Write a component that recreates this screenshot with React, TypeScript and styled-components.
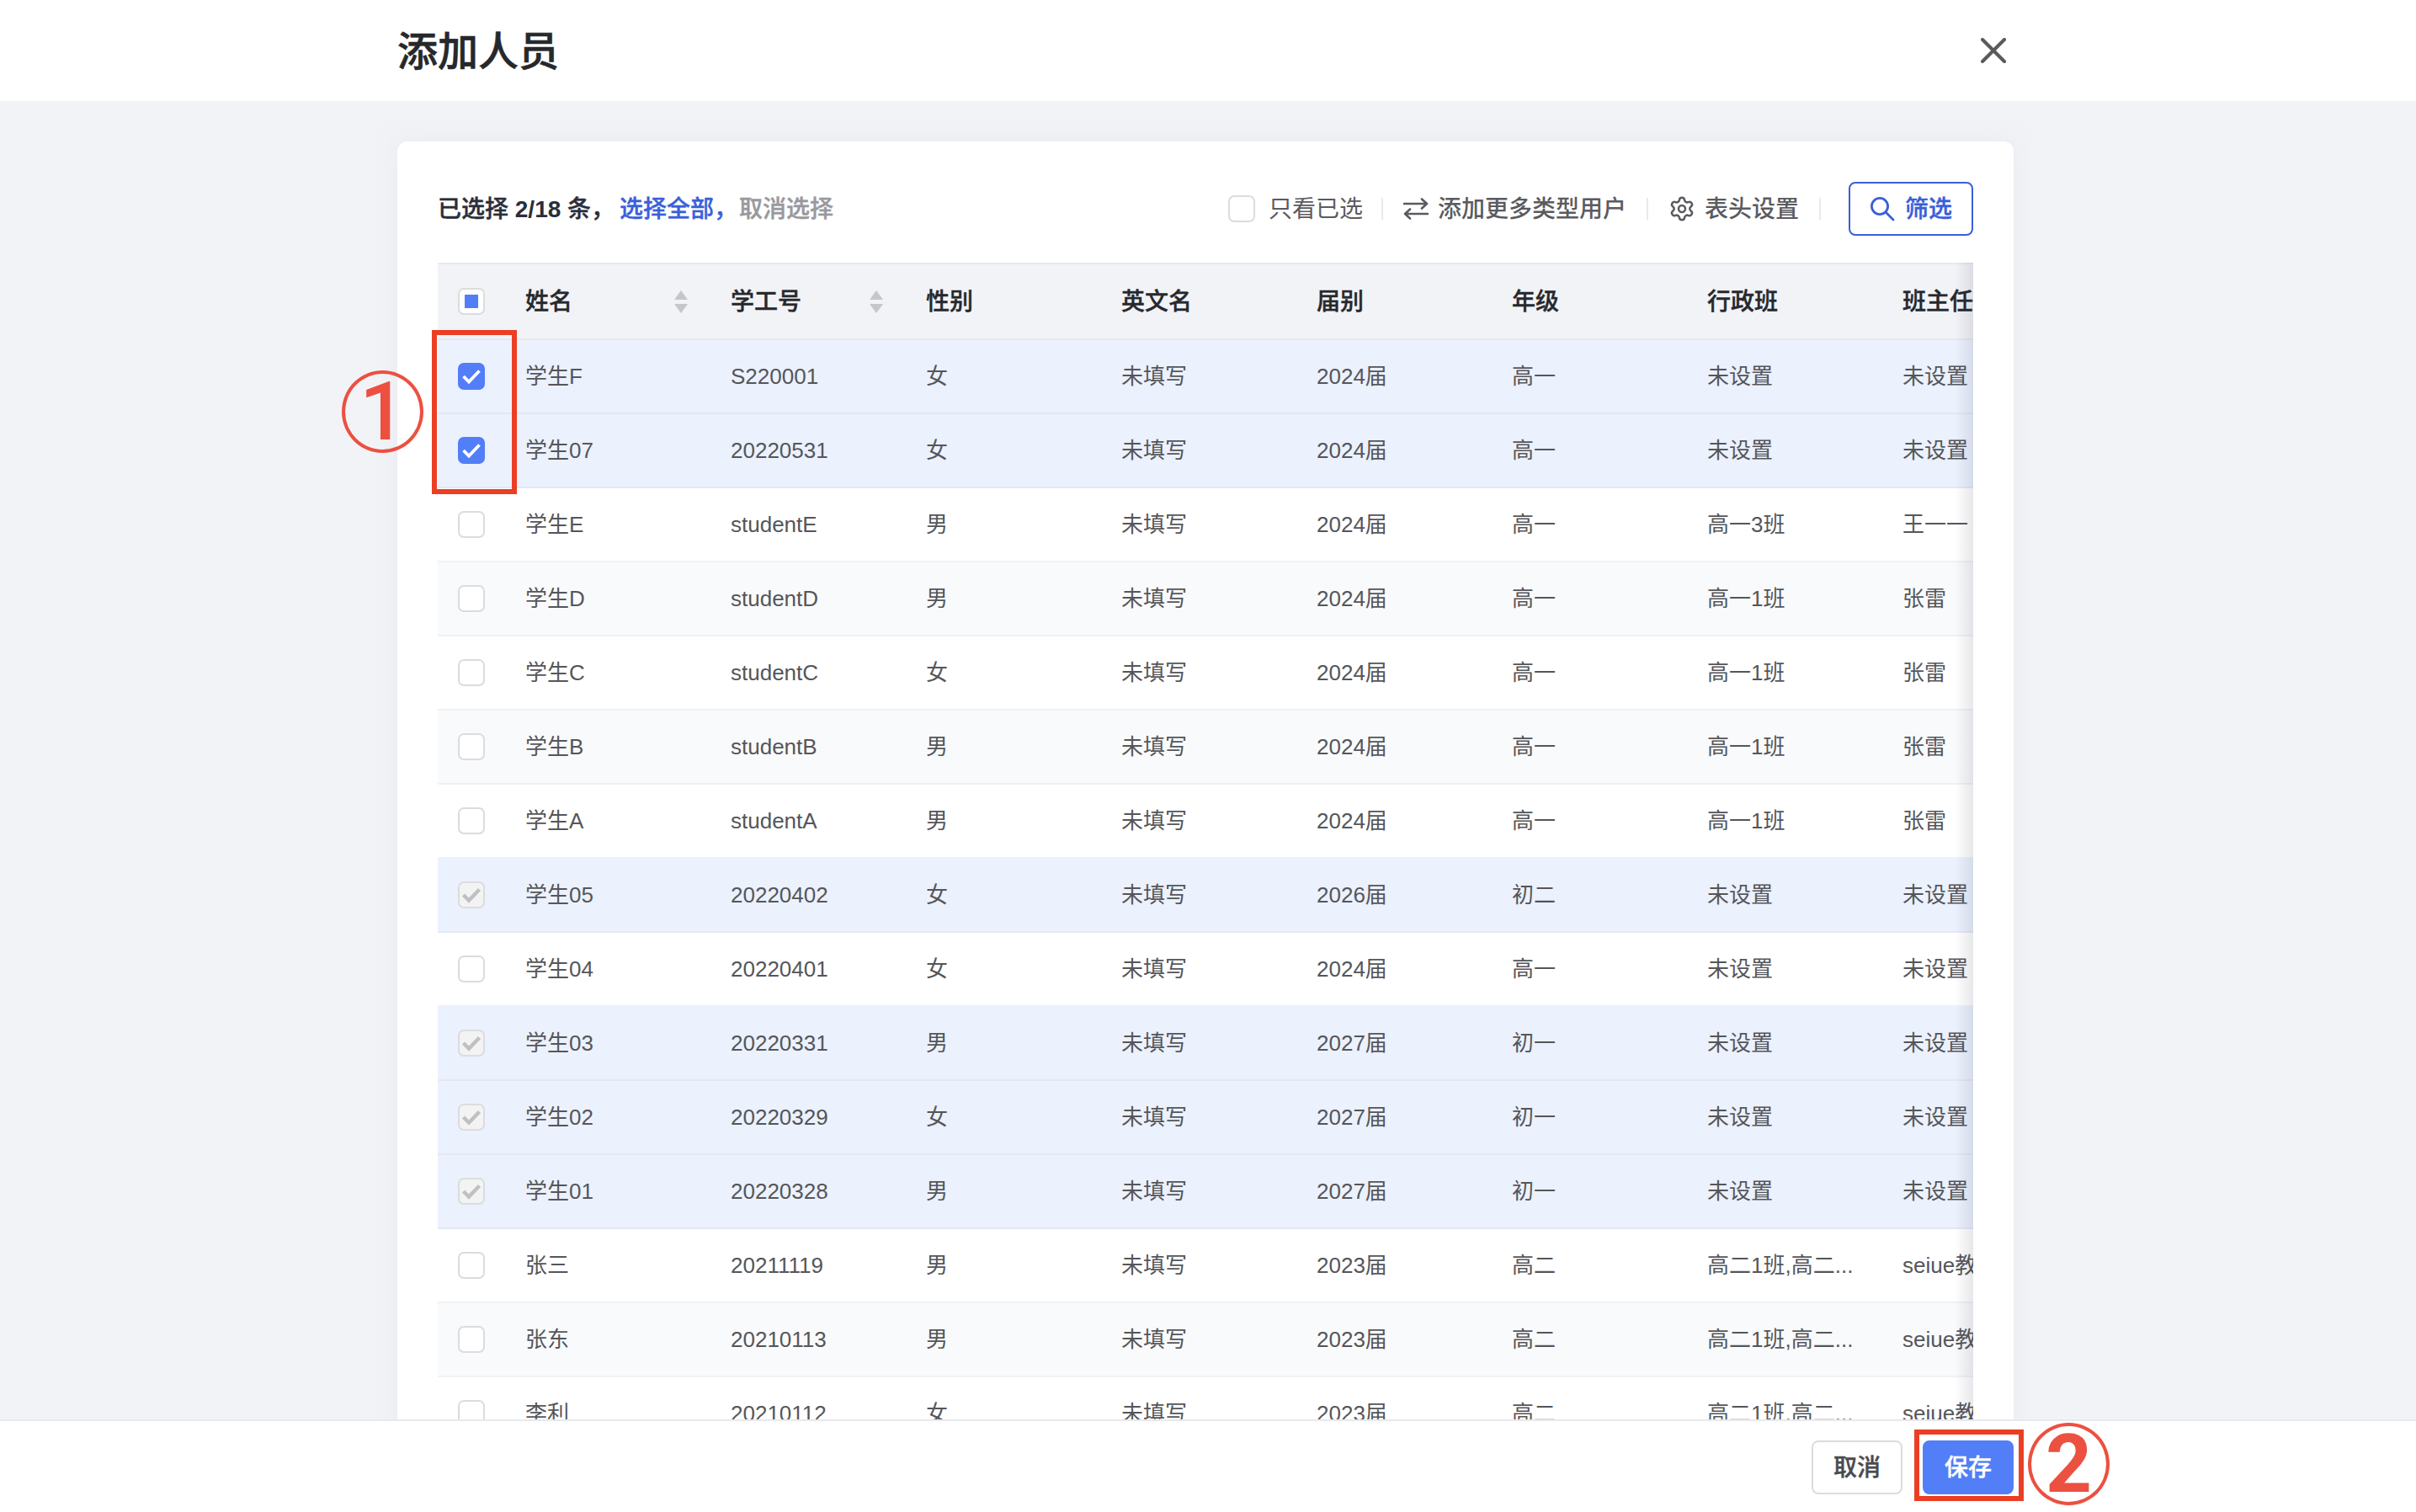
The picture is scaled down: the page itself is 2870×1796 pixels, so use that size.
import styled, { createGlobalStyle, css } from "styled-components";
import { Settings } from "lucide-react";

type CheckState = "on" | "off" | "disabled" | "partial";
type Tone = "selected" | "plain" | "stripe";

interface Student {
  name: string;
  id: string;
  gender: string;
  year: string;
  grade: string;
  klass: string;
  teacher: string;
  check: CheckState;
}

const COLUMNS = "104px 244px repeat(7, 232px)";
const BLUE = "#527ef7";
const LINK = "#3a5fd9";
const RED = "#ea3f25";

const UNSET = { klass: "未设置", teacher: "未设置" };
const CLASS_ONE = { klass: "高一1班", teacher: "张雷" };
const SENIOR = { year: "2023届", grade: "高二", klass: "高二1班,高二...", teacher: "seiue教师", check: "off" as CheckState };

const STUDENTS: Student[] = [
  { name: "学生F", id: "S220001", gender: "女", year: "2024届", grade: "高一", ...UNSET, check: "on" },
  { name: "学生07", id: "20220531", gender: "女", year: "2024届", grade: "高一", ...UNSET, check: "on" },
  { name: "学生E", id: "studentE", gender: "男", year: "2024届", grade: "高一", klass: "高一3班", teacher: "王一一", check: "off" },
  { name: "学生D", id: "studentD", gender: "男", year: "2024届", grade: "高一", ...CLASS_ONE, check: "off" },
  { name: "学生C", id: "studentC", gender: "女", year: "2024届", grade: "高一", ...CLASS_ONE, check: "off" },
  { name: "学生B", id: "studentB", gender: "男", year: "2024届", grade: "高一", ...CLASS_ONE, check: "off" },
  { name: "学生A", id: "studentA", gender: "男", year: "2024届", grade: "高一", ...CLASS_ONE, check: "off" },
  { name: "学生05", id: "20220402", gender: "女", year: "2026届", grade: "初二", ...UNSET, check: "disabled" },
  { name: "学生04", id: "20220401", gender: "女", year: "2024届", grade: "高一", ...UNSET, check: "off" },
  { name: "学生03", id: "20220331", gender: "男", year: "2027届", grade: "初一", ...UNSET, check: "disabled" },
  { name: "学生02", id: "20220329", gender: "女", year: "2027届", grade: "初一", ...UNSET, check: "disabled" },
  { name: "学生01", id: "20220328", gender: "男", year: "2027届", grade: "初一", ...UNSET, check: "disabled" },
  { name: "张三", id: "20211119", gender: "男", ...SENIOR },
  { name: "张东", id: "20210113", gender: "男", ...SENIOR },
  { name: "李利", id: "20210112", gender: "女", ...SENIOR },
];

const GlobalStyle = createGlobalStyle`
  html, body {
    margin: 0;
    padding: 0;
    background: #fff;
  }
  * {
    box-sizing: border-box;
  }
  body {
    font-family: "Liberation Sans", "Noto Sans CJK SC", sans-serif;
    line-height: 36px;
  }
`;

// the reference text is rendered a little heavier than Noto's medium
const heavy = css`
  font-weight: 500;
  -webkit-text-stroke: 0.4px currentColor;
`;

const Page = styled.div`
  position: relative;
  width: 2870px;
  height: 1796px;
  display: flex;
  flex-direction: column;
  overflow: hidden;
  background: #fff;
`;

const Header = styled.header`
  height: 120px;
  flex-shrink: 0;
  display: flex;
  align-items: center;
  justify-content: space-between;
  padding: 0 487px 0 472px;
  background: #fff;
`;

const Title = styled.h1`
  margin: 0;
  padding-top: 3px;
  font-size: 48px;
  line-height: 56px;
  ${heavy}
  -webkit-text-stroke-width: 0.6px;
  color: #26282c;
`;

const CloseIcon = styled.svg`
  width: 30px;
  height: 30px;
  stroke: #5a5a5c;
  stroke-width: 4;
  stroke-linecap: round;
`;

const Main = styled.main`
  flex: 1;
  min-height: 0;
  overflow: hidden;
  padding: 48px 0 0 472px;
  background: #f2f3f7;
`;

const Card = styled.section`
  width: 1920px;
  padding: 48px;
  border-radius: 12px;
  background: #fff;
  box-shadow: 0 0 24px rgba(225, 227, 235, 0.5);
`;

const Toolbar = styled.div`
  height: 64px;
  margin-bottom: 32px;
  display: flex;
  align-items: center;
  justify-content: space-between;
`;

const Summary = styled.div`
  display: flex;
  align-items: center;
  padding-top: 2px;
  font-size: 28px;
  ${heavy}
`;

const SummaryText = styled.span<{ $color: string; $gap?: number }>`
  color: ${({ $color }) => $color};
  margin-right: ${({ $gap }) => $gap ?? 0}px;
  white-space: pre;
`;

const Count = styled.b`
  font-weight: 700;
  -webkit-text-stroke: 0;
`;

const Tools = styled.div`
  display: flex;
  align-items: center;
  gap: 24px;
`;

const ToolItem = styled.div<{ $gap: number; $pull?: number }>`
  display: flex;
  align-items: center;
  gap: ${({ $gap }) => $gap}px;
  margin-right: ${({ $pull }) => -($pull ?? 0)}px;
  font-size: 28px;
  color: #5a5b60;
`;

const ToolLabel = styled.span<{ $strong?: boolean }>`
  padding-top: 2px;
  font-weight: ${({ $strong }) => ($strong ? 500 : 400)};
`;

const ToolDivider = styled.span`
  width: 2px;
  height: 26px;
  background: #e8e9ec;
`;

const SwapIcon = styled.svg`
  width: 30px;
  height: 28px;
  fill: none;
  stroke: #5a5b60;
  stroke-width: 2.6;
  stroke-linecap: round;
  stroke-linejoin: round;
`;

const FilterButton = styled.button`
  width: 148px;
  height: 64px;
  margin-left: 9px;
  padding: 0;
  display: flex;
  align-items: center;
  justify-content: center;
  gap: 12px;
  border: 2px solid ${LINK};
  border-radius: 8px;
  background: #fff;
  color: ${LINK};
  font-family: inherit;
  font-size: 28px;
  line-height: 36px;
  ${heavy}
`;

const FilterLabel = styled.span`
  padding-top: 2px;
`;

const SearchIcon = styled.svg`
  width: 30px;
  height: 30px;
  fill: none;
  stroke: ${LINK};
  stroke-width: 2.8;
  stroke-linecap: round;
`;

const Table = styled.div`
  position: relative;
  width: 1824px;
  overflow: hidden;

  &::after {
    content: "";
    position: absolute;
    top: 0;
    right: 0;
    bottom: 0;
    width: 22px;
    background: linear-gradient(to left, rgba(60, 64, 90, 0.12), rgba(60, 64, 90, 0));
  }
`;

const HeadRow = styled.div`
  height: 92px;
  display: grid;
  grid-template-columns: ${COLUMNS};
  align-items: center;
  border-top: 2px solid #e8e9ec;
  border-bottom: 2px solid #e8e9ec;
  background: #f2f3f7;
  font-size: 28px;
  ${heavy}
  color: #26282c;
  white-space: nowrap;
`;

const HeadCell = styled.div<{ $sortable?: boolean }>`
  display: flex;
  align-items: center;
  justify-content: space-between;
  ${({ $sortable }) =>
    $sortable &&
    css`
      padding-right: 51px;
    `}
`;

const HeadLabel = styled.span`
  padding-top: 2px;
`;

const SortIcon = styled.svg`
  width: 16px;
  height: 27px;
  fill: #c4c6cc;
`;

const TONES: Record<Tone, { bg: string; line: string }> = {
  selected: { bg: "#ebf1fd", line: "#e3e8f3" },
  plain: { bg: "#fff", line: "#f0f1f4" },
  stripe: { bg: "#f9fafb", line: "#f0f1f4" },
};

// an unselected row right above a selected one has its line in the selected blue
const Row = styled.div<{ $tone: Tone; $beforeSelected: boolean }>`
  height: 88px;
  display: grid;
  grid-template-columns: ${COLUMNS};
  align-items: center;
  background: ${({ $tone }) => TONES[$tone].bg};
  border-bottom: 2px solid
    ${({ $tone, $beforeSelected }) =>
      $tone !== "selected" && $beforeSelected ? TONES.selected.bg : TONES[$tone].line};
  font-size: 26px;
  color: #55565a;
  white-space: nowrap;
`;

const CheckCell = styled.div`
  padding-left: 24px;
  display: flex;
  align-items: center;
`;

const Cell = styled.div`
  min-width: 0;
`;

const Box = styled.span<{ $state: CheckState }>`
  width: 32px;
  height: 32px;
  flex-shrink: 0;
  display: flex;
  align-items: center;
  justify-content: center;
  border-radius: 7px;
  border: 2px solid ${({ $state }) => ($state === "on" ? BLUE : "#dcdcde")};
  background: ${({ $state }) =>
    $state === "on" ? BLUE : $state === "disabled" ? "#f3f3f4" : "#fff"};
`;

const PartialMark = styled.span`
  width: 16px;
  height: 16px;
  background: ${BLUE};
`;

const CheckMark = styled.svg<{ $muted?: boolean }>`
  width: 28px;
  height: 28px;
  fill: none;
  stroke: ${({ $muted }) => ($muted ? "#bfc0c2" : "#fff")};
  stroke-width: ${({ $muted }) => ($muted ? 4.4 : 3.8)};
`;

const Footer = styled.footer`
  height: 110px;
  flex-shrink: 0;
  display: flex;
  align-items: center;
  justify-content: flex-end;
  gap: 24px;
  padding: 2px 478px 0 0;
  border-top: 2px solid #e8e9ec;
  background: #fff;
`;

const ActionButton = styled.button<{ $primary?: boolean }>`
  width: 108px;
  height: 64px;
  padding: 2px 0 0;
  border-radius: 8px;
  font-family: inherit;
  font-size: 28px;
  line-height: 36px;
  ${heavy}
  border: 2px solid ${({ $primary }) => ($primary ? BLUE : "#dcdcde")};
  background: ${({ $primary }) => ($primary ? BLUE : "#fff")};
  color: ${({ $primary }) => ($primary ? "#fff" : "#4a4b4f")};
`;

const markFrame = css`
  position: absolute;
  border: 6px solid ${RED};
  pointer-events: none;
`;

const RowsFrame = styled.div`
  ${markFrame}
  left: 513px;
  top: 392px;
  width: 101px;
  height: 195px;
`;

const SaveFrame = styled.div`
  ${markFrame}
  left: 2274px;
  top: 1698px;
  width: 130px;
  height: 85px;
`;

const markCircle = css`
  position: absolute;
  width: 97px;
  height: 98px;
  display: flex;
  align-items: center;
  justify-content: center;
  border: 4px solid #ec5040;
  border-radius: 50%;
  color: #ec5040;
  font-family: Roboto, sans-serif;
  font-size: 96px;
  font-weight: 500;
  line-height: 1;
`;

const CircleOne = styled.div`
  ${markCircle}
  left: 406px;
  top: 440px;
`;

const CircleTwo = styled.div`
  ${markCircle}
  left: 2409px;
  top: 1690px;
  font-weight: 700;
`;

function Checkbox({ state }: { state: CheckState }) {
  return (
    <Box $state={state}>
      {state === "partial" && <PartialMark />}
      {(state === "on" || state === "disabled") && (
        <CheckMark viewBox="0 0 28 28" $muted={state === "disabled"}>
          <polyline points="4.5,14 11,20.5 23.5,7.5" />
        </CheckMark>
      )}
    </Box>
  );
}

function Sort() {
  return (
    <SortIcon viewBox="0 0 16 27">
      <polygon points="8,0 16,11 0,11" />
      <polygon points="0,16 16,16 8,27" />
    </SortIcon>
  );
}

function isSelected(student?: Student) {
  return student?.check === "on" || student?.check === "disabled";
}

function rowTone(student: Student, index: number): Tone {
  if (isSelected(student)) return "selected";
  return index % 2 === 1 ? "stripe" : "plain";
}

export default function App() {
  return (
    <Page>
      <GlobalStyle />
      <Header>
        <Title>添加人员</Title>
        <CloseIcon viewBox="0 0 30 30">
          <line x1="2" y1="2" x2="28" y2="28" />
          <line x1="28" y1="2" x2="2" y2="28" />
        </CloseIcon>
      </Header>
      <Main>
        <Card>
          <Toolbar>
            <Summary>
              <SummaryText $color="#2a2e3a" $gap={6}>
                已选择 <Count>2/18</Count> 条，
              </SummaryText>
              <SummaryText $color={LINK} $gap={2}>选择全部，</SummaryText>
              <SummaryText $color="#98999e">取消选择</SummaryText>
            </Summary>
            <Tools>
              <ToolItem $gap={16} $pull={2}>
                <Checkbox state="off" />
                <ToolLabel>只看已选</ToolLabel>
              </ToolItem>
              <ToolDivider />
              <ToolItem $gap={11}>
                <SwapIcon viewBox="0 0 30 28">
                  <path d="M1 8h27M22 2.5l6 5.5-6 5.5" />
                  <path d="M29 20H2M8 14.5L2 20l6 5.5" />
                </SwapIcon>
                <ToolLabel $strong>添加更多类型用户</ToolLabel>
              </ToolItem>
              <ToolDivider />
              <ToolItem $gap={11}>
                <Settings size={32} strokeWidth={1.9} />
                <ToolLabel $strong>表头设置</ToolLabel>
              </ToolItem>
              <ToolDivider />
              <FilterButton>
                <SearchIcon viewBox="0 0 30 30">
                  <circle cx="12" cy="12" r="9.6" />
                  <line x1="19.5" y1="19.5" x2="28" y2="28" />
                </SearchIcon>
                <FilterLabel>筛选</FilterLabel>
              </FilterButton>
            </Tools>
          </Toolbar>
          <Table>
            <HeadRow>
              <CheckCell>
                <Checkbox state="partial" />
              </CheckCell>
              <HeadCell $sortable>
                <HeadLabel>姓名</HeadLabel>
                <Sort />
              </HeadCell>
              <HeadCell $sortable>
                <HeadLabel>学工号</HeadLabel>
                <Sort />
              </HeadCell>
              <HeadCell><HeadLabel>性别</HeadLabel></HeadCell>
              <HeadCell><HeadLabel>英文名</HeadLabel></HeadCell>
              <HeadCell><HeadLabel>届别</HeadLabel></HeadCell>
              <HeadCell><HeadLabel>年级</HeadLabel></HeadCell>
              <HeadCell><HeadLabel>行政班</HeadLabel></HeadCell>
              <HeadCell><HeadLabel>班主任</HeadLabel></HeadCell>
            </HeadRow>
            {STUDENTS.map((student, index) => (
              <Row
                key={student.name}
                $tone={rowTone(student, index)}
                $beforeSelected={isSelected(STUDENTS[index + 1])}
              >
                <CheckCell>
                  <Checkbox state={student.check} />
                </CheckCell>
                <Cell>{student.name}</Cell>
                <Cell>{student.id}</Cell>
                <Cell>{student.gender}</Cell>
                <Cell>未填写</Cell>
                <Cell>{student.year}</Cell>
                <Cell>{student.grade}</Cell>
                <Cell>{student.klass}</Cell>
                <Cell>{student.teacher}</Cell>
              </Row>
            ))}
          </Table>
        </Card>
      </Main>
      <Footer>
        <ActionButton>取消</ActionButton>
        <ActionButton $primary>保存</ActionButton>
      </Footer>
      <RowsFrame />
      <CircleOne>1</CircleOne>
      <SaveFrame />
      <CircleTwo>2</CircleTwo>
    </Page>
  );
}
